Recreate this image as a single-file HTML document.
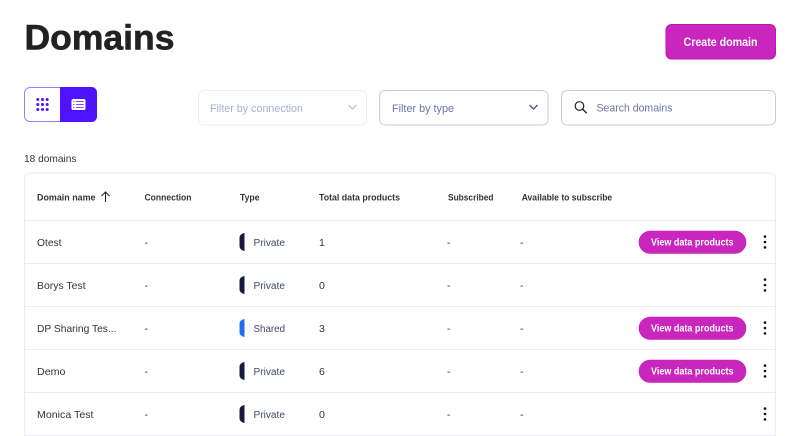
<!DOCTYPE html>
<html><head><meta charset="utf-8"><style>
html,body{margin:0;padding:0;background:#fff;width:800px;height:436px;overflow:hidden}
svg{display:block}
text{font-family:"Liberation Sans",sans-serif}
.h{font-size:9.5px;font-weight:700;fill:#33333b}
.n{font-size:10.5px;fill:#33333c}
.t{font-size:10px;fill:#454a68}
.b{font-size:10px;font-weight:700;fill:#fff}
</style></head><body>
<svg width="800" height="436" viewBox="0 0 800 436" xmlns="http://www.w3.org/2000/svg">
<defs>
<g id="kebab"><circle cx="765" cy="-5.4" r="1.3" fill="#111"/><circle cx="765" cy="0" r="1.3" fill="#111"/><circle cx="765" cy="5.4" r="1.3" fill="#111"/></g>
<g id="pill"><rect x="639" y="-11" width="107" height="22.5" rx="11.25" fill="#c926bd" stroke="#c516b5" stroke-width=".6"/><text class="b" x="651" y="3.5" textLength="82.5" lengthAdjust="spacingAndGlyphs">View data products</text></g>
<path id="bd" d="M244.500-9v18c-3-.5-5-2.200-5-5V-4c0-2.800 2-4.500 5-5z"/>
</defs>
<text x="24.500" y="49.300" font-size="35" font-weight="700" fill="#222" stroke="#222" stroke-width=".6" textLength="150" lengthAdjust="spacingAndGlyphs">Domains</text>
<rect x="666" y="24.500" width="109.500" height="34.500" rx="5.500" fill="#c926bd" stroke="#c70fb8"/>
<text x="683.500" y="46" font-size="12" font-weight="700" fill="#fff" textLength="74" lengthAdjust="spacingAndGlyphs">Create domain</text>

<rect x="24.500" y="87.500" width="72" height="34" rx="5.500" fill="#fff" stroke="#9b7eff"/>
<path d="M60 87h31.500a5.500 5.500 0 0 1 5.500 5.500v24a5.500 5.500 0 0 1-5.500 5.500H60z" fill="#4f12ff"/>
<g fill="#4f12ff"><circle cx="37.800" cy="99.500" r="1.500"/><circle cx="42.500" cy="99.500" r="1.500"/><circle cx="47.200" cy="99.500" r="1.500"/><circle cx="37.800" cy="104.500" r="1.500"/><circle cx="42.500" cy="104.500" r="1.500"/><circle cx="47.200" cy="104.500" r="1.500"/><circle cx="37.800" cy="109.500" r="1.500"/><circle cx="42.500" cy="109.500" r="1.500"/><circle cx="47.200" cy="109.500" r="1.500"/></g>
<rect x="71.500" y="99" width="14" height="11" rx="1.800" fill="#fff"/>
<g stroke="#4f12ff" stroke-width=".8"><path d="M73.200 101.500h1.200M73.200 104.500h1.200M73.200 107.500h1.200M75.800 101.500h8M75.800 104.500h8M75.800 107.500h8"/></g>

<rect x="198.500" y="90.500" width="168" height="34.500" rx="5.500" fill="#fff" stroke="#eeeef8"/>
<text x="210" y="112" font-size="11" fill="#a9aed3" textLength="93" lengthAdjust="spacingAndGlyphs">Filter by connection</text>
<path d="M348.500 105l4 4 4-4" fill="none" stroke="#c3c6dc" stroke-width="1.400"/>
<rect x="379.500" y="90.500" width="168.500" height="34.500" rx="5.500" fill="#fff" stroke="#c6cce6"/>
<text x="392" y="112" font-size="11" fill="#6d75a8" textLength="62" lengthAdjust="spacingAndGlyphs">Filter by type</text>
<path d="M529.500 105l4 4 4-4" fill="none" stroke="#4d5a96" stroke-width="1.500"/>
<rect x="561.500" y="90.500" width="214" height="34.500" rx="5.500" fill="#fff" stroke="#c6cce6"/>
<circle cx="579.500" cy="106" r="4.300" fill="none" stroke="#222" stroke-width="1.200"/>
<path d="M582.700 109.200l4 4" stroke="#222" stroke-width="1.400"/>
<text x="596.500" y="111.500" font-size="11" fill="#6d75a8" textLength="76" lengthAdjust="spacingAndGlyphs">Search domains</text>

<text x="24" y="162" font-size="10.500" fill="#33333c" textLength="52.500" lengthAdjust="spacingAndGlyphs">18 domains</text>

<path d="M24.500 437V179a6 6 0 0 1 6-6h739a6 6 0 0 1 6 6v258" fill="#fff" stroke="#ebebf6"/>
<g stroke="#ebebf6"><path d="M25 220.500h750M25 263.500h750M25 306.500h750M25 349.500h750M25 392.500h750M25 435.500h750"/></g>

<text class="h" x="37" y="200.300" textLength="58.500" lengthAdjust="spacingAndGlyphs">Domain name</text>
<path d="M105.500 202v-10M101.500 196l4-4 4 4" fill="none" stroke="#222" stroke-width="1"/>
<text class="h" x="144.500" y="200.300" textLength="47" lengthAdjust="spacingAndGlyphs">Connection</text>
<text class="h" x="240" y="200.300" textLength="19.500" lengthAdjust="spacingAndGlyphs">Type</text>
<text class="h" x="319" y="200.300" textLength="81" lengthAdjust="spacingAndGlyphs">Total data products</text>
<text class="h" x="448" y="200.300" textLength="45.500" lengthAdjust="spacingAndGlyphs">Subscribed</text>
<text class="h" x="521.700" y="200.300" textLength="90.500" lengthAdjust="spacingAndGlyphs">Available to subscribe</text>

<g transform="translate(0,242)">
<text class="n" x="37" y="4" textLength="24.500" lengthAdjust="spacingAndGlyphs">Otest</text>
<text class="n" x="144.500" y="4">-</text>
<use href="#bd" fill="#141c3c"/>
<text class="t" x="253.500" y="4" textLength="31.500" lengthAdjust="spacingAndGlyphs">Private</text>
<text class="n" x="319" y="4">1</text>
<text class="n" x="447" y="4">-</text><text class="n" x="520" y="4">-</text>
<use href="#pill"/><use href="#kebab"/>
</g>
<g transform="translate(0,285)">
<text class="n" x="37" y="4" textLength="48.500" lengthAdjust="spacingAndGlyphs">Borys Test</text>
<text class="n" x="144.500" y="4">-</text>
<use href="#bd" fill="#141c3c"/>
<text class="t" x="253.500" y="4" textLength="31.500" lengthAdjust="spacingAndGlyphs">Private</text>
<text class="n" x="319" y="4">0</text>
<text class="n" x="447" y="4">-</text><text class="n" x="520" y="4">-</text>
<use href="#kebab"/>
</g>
<g transform="translate(0,328)">
<text class="n" x="37" y="4" textLength="79.500" lengthAdjust="spacingAndGlyphs">DP Sharing Tes...</text>
<text class="n" x="144.500" y="4">-</text>
<use href="#bd" fill="#1f6fee"/>
<text class="t" x="253.500" y="4" textLength="31.500" lengthAdjust="spacingAndGlyphs">Shared</text>
<text class="n" x="319" y="4">3</text>
<text class="n" x="447" y="4">-</text><text class="n" x="520" y="4">-</text>
<use href="#pill"/><use href="#kebab"/>
</g>
<g transform="translate(0,371)">
<text class="n" x="37" y="4" textLength="28.500" lengthAdjust="spacingAndGlyphs">Demo</text>
<text class="n" x="144.500" y="4">-</text>
<use href="#bd" fill="#141c3c"/>
<text class="t" x="253.500" y="4" textLength="31.500" lengthAdjust="spacingAndGlyphs">Private</text>
<text class="n" x="319" y="4">6</text>
<text class="n" x="447" y="4">-</text><text class="n" x="520" y="4">-</text>
<use href="#pill"/><use href="#kebab"/>
</g>
<g transform="translate(0,414)">
<text class="n" x="37" y="4" textLength="56.500" lengthAdjust="spacingAndGlyphs">Monica Test</text>
<text class="n" x="144.500" y="4">-</text>
<use href="#bd" fill="#141c3c"/>
<text class="t" x="253.500" y="4" textLength="31.500" lengthAdjust="spacingAndGlyphs">Private</text>
<text class="n" x="319" y="4">0</text>
<text class="n" x="447" y="4">-</text><text class="n" x="520" y="4">-</text>
<use href="#kebab"/>
</g>
</svg>
</body></html>
